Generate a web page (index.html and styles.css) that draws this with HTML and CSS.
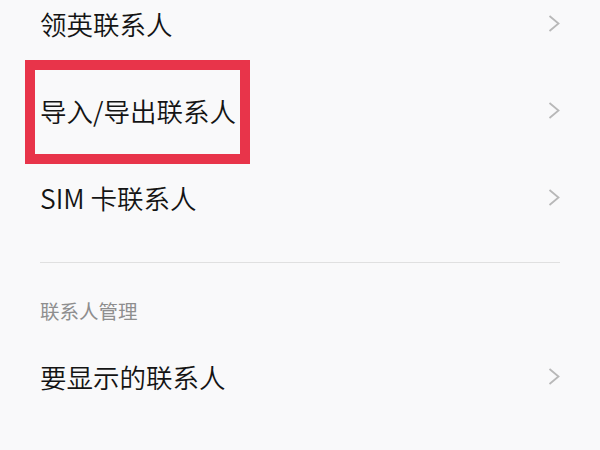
FILE: index.html
```html
<!DOCTYPE html>
<html lang="zh-CN">
<head>
<meta charset="utf-8">
<link rel="stylesheet" href="styles.css">
</head>
<body>
<div class="page">
  <div class="list">
    <div class="row"><span class="label">领英联系人</span><svg class="chev" width="12" height="17" viewBox="0 0 12 17"><polyline points="1.5,1 10.5,8.5 1.5,16"/></svg></div>
    <div class="row"><span class="label">导入/导出联系人</span><svg class="chev" width="12" height="17" viewBox="0 0 12 17"><polyline points="1.5,1 10.5,8.5 1.5,16"/></svg></div>
    <div class="row"><span class="label">SIM 卡联系人</span><svg class="chev" width="12" height="17" viewBox="0 0 12 17"><polyline points="1.5,1 10.5,8.5 1.5,16"/></svg></div>
  </div>
  <div class="divider"></div>
  <div class="section-title">联系人管理</div>
  <div class="list">
    <div class="row"><span class="label">要显示的联系人</span><svg class="chev" width="12" height="17" viewBox="0 0 12 17"><polyline points="1.5,1 10.5,8.5 1.5,16"/></svg></div>
  </div>
  <div class="highlight"></div>
</div>
</body>
</html>
```
FILE: styles.css
```css
html, body {
  margin: 0;
  padding: 0;
  background: #f9f9fa;
}
body {
  width: 600px;
  height: 450px;
  overflow: hidden;
  font-family: "Noto Sans CJK SC", "Noto Sans", sans-serif;
}
.page {
  position: relative;
  margin-top: -20px;
}
.list {
  display: flex;
  flex-direction: column;
}
.row {
  height: 87px;
  display: flex;
  align-items: center;
  justify-content: space-between;
  padding: 0 40px;
}
.label {
  font-size: 26.5px;
  font-weight: 350;
  color: #141414;
  line-height: 30px;
}
.chev polyline {
  fill: none;
  stroke: #b8b8b8;
  stroke-width: 1.8;
}
.divider {
  margin: 21px 40px 0;
  height: 1px;
  background: #e0e0e0;
}
.section-title {
  font-size: 19.5px;
  font-weight: 400;
  color: #8e8e8e;
  line-height: 24px;
  padding: 36px 40px 10px;
}
.highlight {
  position: absolute;
  left: 25px;
  top: 80px;
  width: 205px;
  height: 84px;
  border: 10px solid #e8344a;
}
```
